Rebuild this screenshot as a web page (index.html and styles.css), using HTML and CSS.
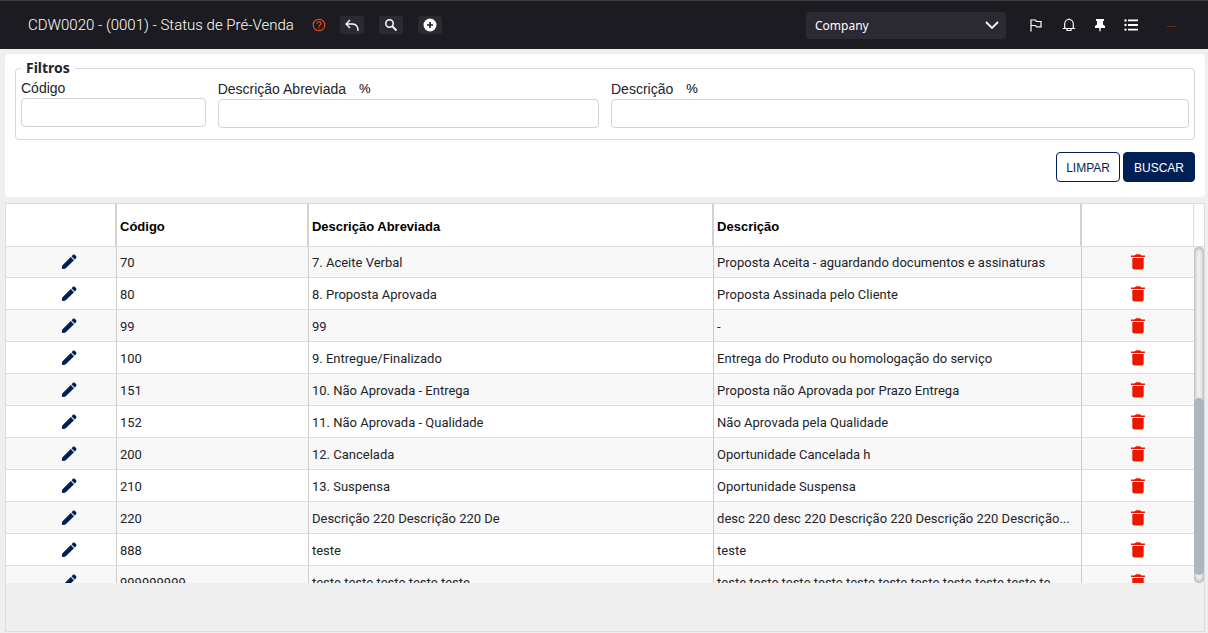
FILE: index.html
```html
<!DOCTYPE html>
<html lang="pt-BR">
<head>
<meta charset="utf-8">
<title>Status de Pré-Venda</title>
<link rel="stylesheet" href="styles.css">
</head>
<body>
<svg class="defs" aria-hidden="true">
  <symbol id="pencil" viewBox="0 0 16 16"><path d="M1.200 14.800c-.4-.8-.3-2 .1-3.300L9.800 3l3.200 3.200-8.500 8.400c-1.200.5-2.500.7-3.300.2z"/><path d="M10.500 2.300l1.300-1.300c.6-.6 1.500-.6 2.100 0l1.100 1.100c.6.6.6 1.500 0 2.100l-1.300 1.300z"/></symbol>
  <symbol id="trash" viewBox="0 0 14 16"><path d="M0 1.500h3.500L5 .3h4l1.500 1.200H14V3H0z"/><path d="M1.300 4h11.400v9.500a2 2 0 0 1-2 2H3.300a2 2 0 0 1-2-2z"/></symbol>
</svg>
<header class="topbar">
  <h1 class="title">CDW0020 - (0001) - Status de Pré-Venda</h1>
  <button class="help" aria-label="Ajuda"><svg width="14" height="14" viewBox="0 0 14 14" fill="none" stroke="currentColor" stroke-width="1.100"><circle cx="7" cy="7" r="5.800"/><path d="M5 5.600c0-2.500 4-2.500 4 0C9 7 7 6.900 7 8.500M7 9.500v1.200"/></svg></button>
  <div class="tools">
    <button class="tool" aria-label="Voltar"><svg width="14" height="14" viewBox="0 0 14 14" fill="none" stroke="currentColor" stroke-width="1.300"><path d="M5 2L1 6l4 4M1 6h6.500C11 6 13 8.500 13 13"/></svg></button>
    <button class="tool" aria-label="Pesquisar"><svg width="14" height="14" viewBox="0 0 14 14" fill="none" stroke="currentColor" stroke-width="1.500"><circle cx="5.500" cy="5.500" r="3.700"/><path d="M8.200 8.200l4.300 4.300" stroke-width="1.800"/></svg></button>
    <button class="tool" aria-label="Adicionar"><svg width="14" height="14" viewBox="0 0 14 14"><circle cx="7" cy="7" r="6.500" fill="currentColor"/><path d="M7 4v6M4 7h6" stroke="#1c1b21" stroke-width="1.600"/></svg></button>
  </div>
  <div class="company">
    <select aria-label="Empresa"><option>Company</option></select>
    <svg width="14" height="8" viewBox="0 0 14 8" fill="none" stroke="#fff" stroke-width="1.800"><path d="M1 1l6 6 6-6"/></svg>
  </div>
  <nav class="actions">
    <button aria-label="Sinalizar"><svg width="14" height="14" viewBox="0 0 14 14" fill="none" stroke="currentColor" stroke-width="1.200"><path d="M2 13.500V2h4.500l1 1.500H12v5.300H7.500L6.500 7.500H2"/></svg></button>
    <button aria-label="Notificações"><svg width="14" height="14" viewBox="0 0 14 14" fill="none" stroke="currentColor" stroke-width="1.200"><path d="M7 .5v1M.8 10.500h12.400M2.700 10.500V6C2.700 0 11.300 0 11.300 6v4.500M5 10.500v2h4v-2"/></svg></button>
    <button aria-label="Fixar"><svg width="10" height="14" viewBox="2 0 10 14" fill="currentColor"><path d="M3 1h8v2h-1v3.500l2 1.500v2H7.700v2.500L7 14l-.7-1.500V10H2V8l2-1.500V3H3z"/></svg></button>
    <button aria-label="Lista"><svg width="14" height="14" viewBox="0 0 14 14" fill="currentColor"><path d="M4 1.500h10v1.800H4zM4 6.100h10v1.800H4zM4 10.700h10v1.800H4z"/><circle cx="1.500" cy="2.400" r="1.200"/><circle cx="1.500" cy="7" r="1.200"/><circle cx="1.500" cy="11.600" r="1.200"/></svg></button>
    <span class="mark"></span>
  </nav>
</header>
<main class="main">
  <form class="panel">
    <fieldset class="filters">
      <legend>Filtros</legend>
      <div class="fields">
        <div class="field code"><label for="codigo">Código</label><input id="codigo" type="text"></div>
        <div class="field short"><div class="labels"><label for="abrev">Descrição Abreviada</label><span>%</span></div><input id="abrev" type="text"></div>
        <div class="field long"><div class="labels"><label for="desc">Descrição</label><span>%</span></div><input id="desc" type="text"></div>
      </div>
    </fieldset>
    <div class="buttons"><button type="reset" class="btn">LIMPAR</button><button type="button" class="btn primary">BUSCAR</button></div>
  </form>
  <section class="grid">
    <div class="grid-head">
      <table class="table">
        <colgroup><col class="c-edit"><col class="c-code"><col class="c-short"><col><col class="c-del"></colgroup>
        <thead><tr><th></th><th>Código</th><th>Descrição Abreviada</th><th>Descrição</th><th></th></tr></thead>
      </table>
    </div>
    <div class="grid-body">
      <div class="viewport">
        <table class="table">
          <colgroup><col class="c-edit"><col class="c-code"><col class="c-short"><col><col class="c-del"></colgroup>
          <tbody id="rows"></tbody>
        </table>
      </div>
      <div class="track"><div class="thumb"></div></div>
    </div>
    <div class="grid-foot"></div>
  </section>
</main>
<script src="rows.js"></script>
</body>
</html>
```
FILE: rows.js
```js
const rows = [
  ["70", "7. Aceite Verbal", "Proposta Aceita - aguardando documentos e assinaturas"],
  ["80", "8. Proposta Aprovada", "Proposta Assinada pelo Cliente"],
  ["99", "99", "-"],
  ["100", "9. Entregue/Finalizado", "Entrega do Produto ou homologação do serviço"],
  ["151", "10. Não Aprovada - Entrega", "Proposta não Aprovada por Prazo Entrega"],
  ["152", "11. Não Aprovada - Qualidade", "Não Aprovada pela Qualidade"],
  ["200", "12. Cancelada", "Oportunidade Cancelada h"],
  ["210", "13. Suspensa", "Oportunidade Suspensa"],
  ["220", "Descrição 220 Descrição 220 De", "desc 220 desc 220 Descrição 220 Descrição 220 Descrição..."],
  ["888", "teste", "teste"],
  ["999999999", "teste teste teste teste teste", "teste teste teste teste teste teste teste teste teste teste te"]
];

document.getElementById("rows").innerHTML = rows.map(([code, short, long]) => `
  <tr>
    <td class="edit"><button aria-label="Editar ${code}"><svg width="16" height="16"><use href="#pencil"/></svg></button></td>
    <td>${code}</td><td>${short}</td><td>${long}</td>
    <td class="del"><button aria-label="Excluir ${code}"><svg width="14" height="16"><use href="#trash"/></svg></button></td>
  </tr>`).join("");
```
FILE: styles.css
```css
* { box-sizing: border-box; }
body {
  margin: 0;
  min-height: 100vh;
  display: flex;
  flex-direction: column;
  background: #efefef;
  color: #212529;
  font: 14px/18px Roboto, sans-serif;
}
button { padding: 0; border: 0; background: none; color: inherit; font: inherit; }
svg { display: block; }
.defs { position: absolute; width: 0; height: 0; }

.topbar {
  display: flex;
  align-items: center;
  height: 49px;
  padding: 0 28px;
  border-top: 1px solid #38383b;
  background: #1c1b21;
  color: #fff;
}
.title { margin: 0; font-size: 15px; font-weight: 300; }
.help { margin-left: 18px; color: #f4511e; }
.tools { display: flex; gap: 15px; margin-left: 14px; }
.tool {
  display: grid;
  place-items: center;
  width: 24px;
  height: 18px;
  border-radius: 3px;
  background: #2b2a33;
}
.company { position: relative; width: 200px; margin-left: auto; }
.company select {
  width: 100%;
  height: 27px;
  padding: 1px 9px 0;
  border: 0;
  border-radius: 3px;
  appearance: none;
  background: #2b2a33;
  color: #fff;
  font: 12px "Noto Sans", sans-serif;
}
.company svg { position: absolute; right: 7px; top: 9px; pointer-events: none; }
.actions { display: flex; align-items: center; gap: 19px; margin-left: 23px; }
.mark { width: 9px; height: 1px; margin: 2px 4px 0 10px; background: linear-gradient(90deg, #82270d, #394020); }

.main { flex: 1; display: flex; flex-direction: column; gap: 6px; padding: 5px 3px 1px 5px; }
.panel { padding: 5px 10px 15px; border-radius: 4px; background: #fff; }
.filters { margin: 0; padding: 2px 5px 11px; border: 1px solid #d6d8da; border-radius: 4px; }
.filters legend { padding: 0 5px; font: 700 14px/18px "Noto Sans", sans-serif; }
.fields {
  display: grid;
  grid-template-columns: repeat(12, 1fr);
  column-gap: 12px;
  font-family: "Liberation Sans", sans-serif;
}
.field label { display: block; }
.code { grid-column: span 2; }
.short { grid-column: span 4; }
.long { grid-column: span 6; }
.labels { display: flex; gap: 13px; padding-top: 1px; }
.labels span { color: #000; font-size: 13px; }
.field input {
  display: block;
  width: 100%;
  height: 29px;
  margin-top: 1px;
  padding: 0 8px;
  border: 1px solid #ced4da;
  border-radius: 4px;
  background: #fff;
  font: inherit;
}
.buttons { display: flex; justify-content: flex-end; gap: 3px; margin-top: 12px; }
.btn {
  height: 30px;
  padding: 1px 9px 0;
  border: 1px solid #001f55;
  border-radius: 4px;
  background: #fff;
  color: #001f55;
  font: 12px "Liberation Sans", sans-serif;
}
.btn.primary { padding: 1px 10px 0; background: #001f55; color: #fff; }

.grid { flex: 1; display: flex; flex-direction: column; border: 1px solid #ddd; }
.grid-head { padding-right: 10px; border-bottom: 1px solid #ddd; background: #fff; }
.grid-body { flex: none; height: 336px; display: flex; }
.viewport { flex: 1; overflow: hidden; }
.viewport .table { margin-top: -1px; }
.table { width: 100%; table-layout: fixed; border-collapse: separate; border-spacing: 0; font-size: 13px; }
.c-edit { width: 111px; }
.c-code { width: 16.16%; }
.c-short { width: 34.1%; }
.c-del { width: 112px; }
.table th {
  height: 42px;
  padding: 3px 3px 0;
  border-right: 2px solid #d2d2d2;
  color: #000;
  font-family: "Liberation Sans", sans-serif;
  text-align: left;
}
.table th:last-child { border-right: 1px solid #ddd; }
.table td {
  height: 32px;
  padding: 2px 4px 0 3px;
  border-right: 1px solid #ccc;
  border-bottom: 1px solid #ddd;
  overflow: hidden;
  text-overflow: ellipsis;
  white-space: nowrap;
}
.table td:last-child { border-right: 0; }
.table tbody tr { background: #fff; }
.table tbody tr:nth-child(odd) { background: #f8f8f8; }
.edit button { display: block; margin-left: 52px; fill: #001f55; }
.del button { display: block; margin: 0 auto; fill: #eb1700; }
.table .edit, .table .del { padding-top: 0; }
.track {
  width: 10px;
  padding-top: 151px;
  border-radius: 5px;
  background: #f0f0f0;
  box-shadow: inset 0 0 4px #888;
}
.thumb { height: 177px; border-radius: 5px; background: #adb5bd; }
.grid-foot { flex: 1 0 48px; }
```
